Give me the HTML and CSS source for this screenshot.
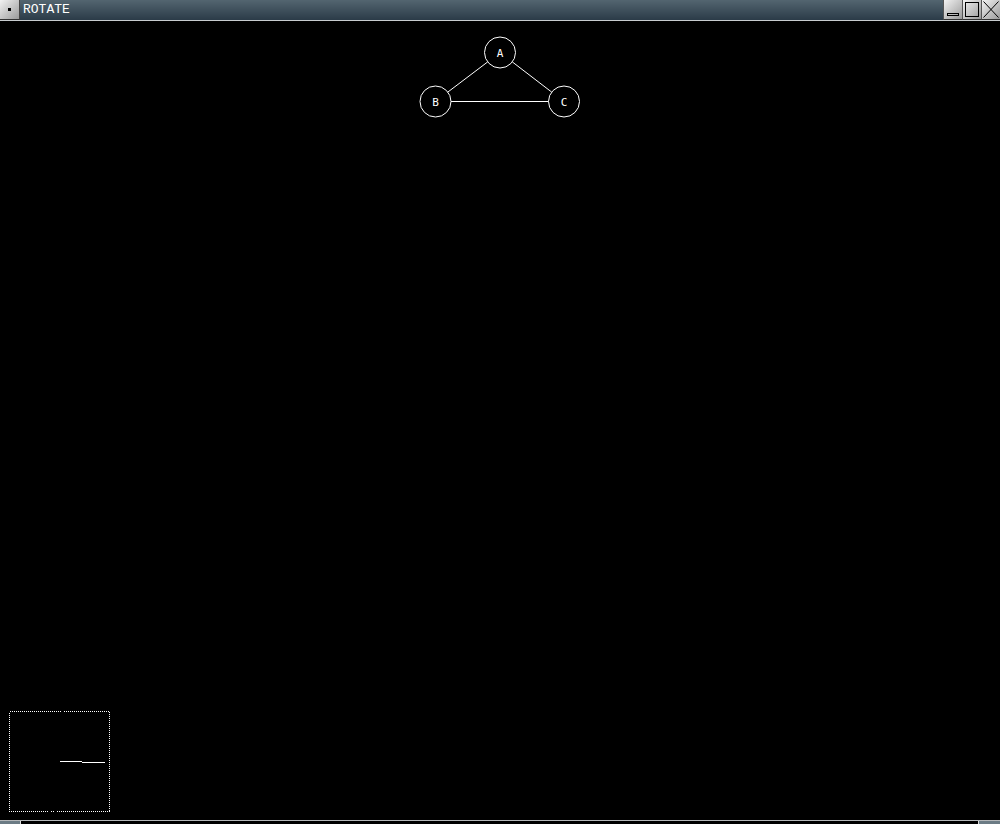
FILE: index.html
```html
<!DOCTYPE html>
<html>
<head>
<meta charset="utf-8">
<title>ROTATE</title>
<link rel="stylesheet" href="styles.css">
</head>
<body>
<div class="window">
  <div class="titlebar">
    <div class="btn menu-btn"><span class="dot"></span></div>
    <div class="title">ROTATE</div>
    <div class="controls">
      <div class="btn"><svg width="18" height="19" viewBox="0 0 18 19"><rect x="3.5" y="13.5" width="11" height="2" fill="none" stroke="#000" stroke-width="1"/></svg></div>
      <div class="btn"><svg width="18" height="19" viewBox="0 0 18 19"><rect x="2.5" y="2.5" width="13" height="14" fill="none" stroke="#000" stroke-width="1"/></svg></div>
      <div class="btn"><svg width="18" height="19" viewBox="0 0 18 19"><path d="M1.5 1.5 L16.5 17.5 M16.5 1.5 L1.5 17.5" stroke="#000" stroke-width="1"/></svg></div>
    </div>
  </div>
  <div class="canvas">
    <svg class="graph" width="1000" height="800" viewBox="0 0 1000 800">
      <g stroke="#fff" stroke-width="1" fill="none">
        <line x1="487.7" y1="40.9" x2="447.8" y2="71.1"/>
        <line x1="512.3" y1="40.9" x2="551.7" y2="71.1"/>
        <line x1="451" y1="80.5" x2="548.5" y2="80.5"/>
        <circle cx="500" cy="31.5" r="15.5"/>
        <circle cx="435.5" cy="80.5" r="15.5"/>
        <circle cx="564" cy="80.5" r="15.5"/>
      </g>
      <g fill="#fff" class="lbl" text-anchor="middle">
        <text x="500" y="35.5">A</text>
        <text x="435.5" y="84.5">B</text>
        <text x="564" y="84.5">C</text>
      </g>
      <rect class="mini" x="9.5" y="690.5" width="100" height="100" fill="none" stroke="#fff" stroke-width="1" stroke-dasharray="1 1"/>
      <line x1="60" y1="740.5" x2="82" y2="740.5" stroke="#fff" stroke-width="1"/>
      <line x1="82" y1="741.5" x2="105" y2="741.5" stroke="#fff" stroke-width="1"/>
    </svg>
  </div>
  <div class="hscroll">
    <div class="arrow"></div>
    <div class="track"></div>
    <div class="arrow right"></div>
  </div>
</div>
</body>
</html>
```
FILE: styles.css
```css
html, body {
  margin: 0;
  padding: 0;
  background: #000;
}
.window {
  width: 1000px;
  height: 824px;
  display: flex;
  flex-direction: column;
  overflow: hidden;
}
.titlebar {
  height: 20px;
  display: flex;
  align-items: stretch;
  background: linear-gradient(#536570, #2b3b48);
  border-bottom: 1px solid #c8cccf;
  flex: none;
}
.btn {
  width: 19px;
  height: 19px;
  background: linear-gradient(135deg, #f2f2f2, #9a9a9a);
  border-right: 1px solid #444;
  border-bottom: 1px solid #333;
  display: flex;
  align-items: center;
  justify-content: center;
}
.btn svg { display: block; }
.menu-btn { margin-right: 3px; }
.dot {
  width: 3px;
  height: 3px;
  background: #000;
}
.title {
  flex: 1;
  color: #fff;
  font-family: "Liberation Mono", monospace;
  font-size: 13px;
  line-height: 20px;
}
.controls {
  display: flex;
}
.controls .btn {
  width: 18px;
  border-right: none;
  border-left: 1px solid #555;
}
.canvas {
  flex: 1;
  position: relative;
  background: #000;
}
.graph {
  position: absolute;
  left: 0;
  top: 0;
}
.mini {
  shape-rendering: crispEdges;
}
.lbl {
  font-family: "DejaVu Sans Mono", monospace;
  font-size: 11px;
}
.hscroll {
  height: 3px;
  border-top: 1px solid #b5b8ba;
  display: flex;
  flex: none;
}
.arrow {
  width: 20px;
  background: #6b7b84;
  border-right: 1px solid #ddd;
}
.arrow.right {
  width: 21px;
  border-right: none;
  border-left: 1px solid #ddd;
}
.track {
  flex: 1;
  background: #000;
}
```
